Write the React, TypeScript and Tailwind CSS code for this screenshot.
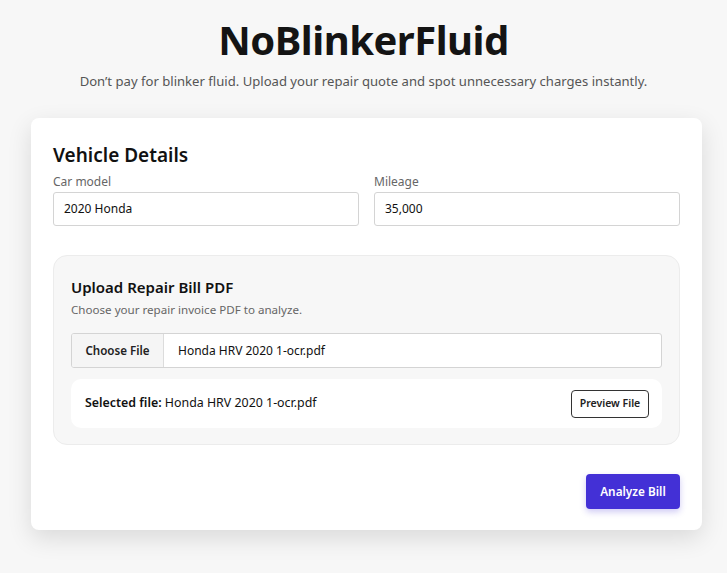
import React from "react";

export default function App() {
  return (
    <div
      className="min-h-[573px] bg-[#f7f7f7] text-[#111] pb-10"
      style={{ fontFamily: '"Noto Sans", "Open Sans", sans-serif' }}
    >
      <div className="flex flex-col items-center pt-[12px]">
        <h1 className="text-[40px] leading-[56px] font-bold text-[#141414] tracking-[-0.5px]">NoBlinkerFluid</h1>
        <p className="mt-[3px] text-[13.1px] leading-[20px] text-[#555]">
          Don’t pay for blinker fluid. Upload your repair quote and spot unnecessary charges instantly.
        </p>
      </div>

      <div className="ml-[31px] mr-[25px] mt-[27px] bg-white rounded-[8px] shadow-[0_8px_24px_rgba(0,0,0,0.12)] px-[22px] pt-[24px] pb-[21px]">
        <h2 className="text-[19px] leading-[26px] font-semibold text-[#111]">Vehicle Details</h2>
        <div className="grid grid-cols-2 gap-[15px] mt-[5px]">
          <div className="flex flex-col">
            <label className="text-[12px] leading-[18px] text-[#666]">Car model</label>
            <div className="mt-[1px] h-[34px] border border-[#d4d4d4] rounded-[3px] px-[10px] flex items-center text-[12px] text-[#111]">
              2020 Honda
            </div>
          </div>
          <div className="flex flex-col">
            <label className="text-[12px] leading-[18px] text-[#666]">Mileage</label>
            <div className="mt-[1px] h-[34px] border border-[#d4d4d4] rounded-[3px] px-[10px] flex items-center text-[12px] text-[#111]">
              35,000
            </div>
          </div>
        </div>

        <div className="mt-[29px] bg-[#f7f7f7] border border-[#ececec] rounded-[14px] px-[17px] pt-[20px] pb-[16px]">
          <h3 className="text-[15px] leading-[22px] font-semibold text-[#111]">Upload Repair Bill PDF</h3>
          <p className="mt-[3px] text-[11.6px] leading-[18px] text-[#666]">Choose your repair invoice PDF to analyze.</p>
          <div className="mt-[14px] h-[35px] flex bg-white border border-[#d4d4d4] rounded-[3px] overflow-hidden">
            <div className="w-[92px] bg-[#f5f5f5] border-r border-[#dcdcdc] flex items-center justify-center text-[11.6px] font-semibold text-[#222]">
              Choose File
            </div>
            <div className="flex items-center pl-[14px] text-[12px] text-[#111]">Honda HRV 2020 1-ocr.pdf</div>
          </div>
          <div className="mt-[11px] h-[49px] bg-white rounded-[10px] flex items-center justify-between pl-[14px] pr-[13px]">
            <p className="text-[12.4px] text-[#111]">
              <span className="font-semibold">Selected file:</span> Honda HRV 2020 1-ocr.pdf
            </p>
            <button className="h-[28px] w-[78px] border border-[#333] rounded-[4px] bg-white text-[10.5px] font-semibold text-[#222]">
              Preview File
            </button>
          </div>
        </div>

        <div className="flex justify-end mt-[29px]">
          <button className="h-[35px] w-[94px] bg-[#4330d6] rounded-[4px] text-white text-[11.8px] font-semibold shadow-[0_3px_6px_rgba(67,48,214,0.25)]">
            Analyze Bill
          </button>
        </div>
      </div>
    </div>
  );
}
